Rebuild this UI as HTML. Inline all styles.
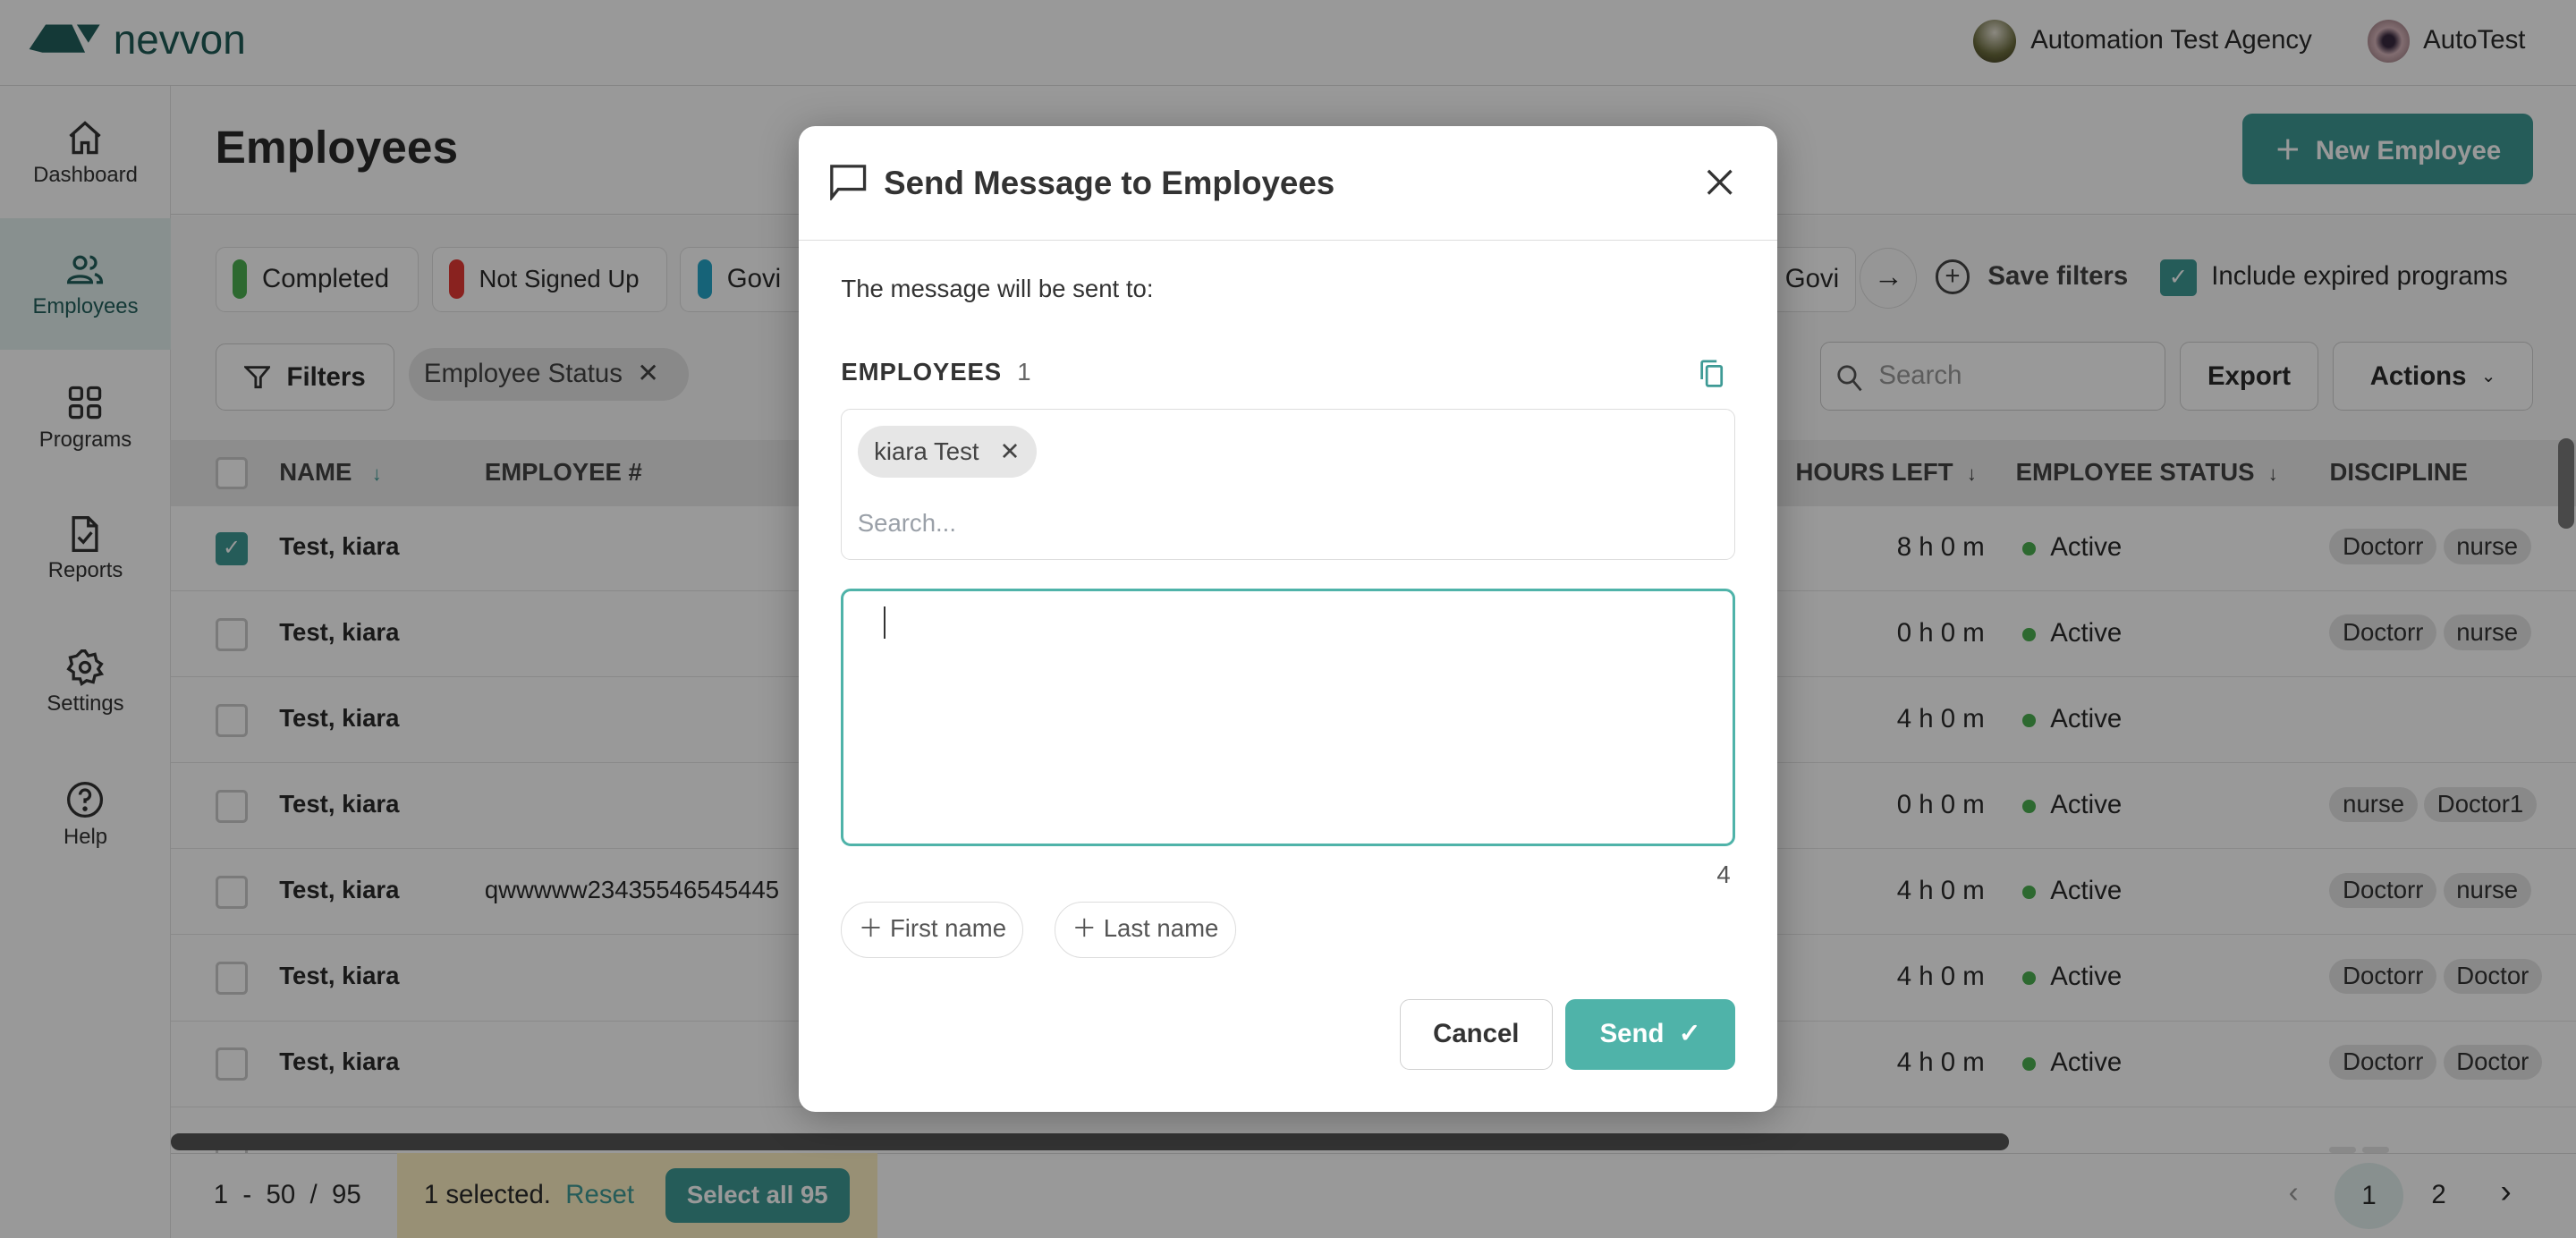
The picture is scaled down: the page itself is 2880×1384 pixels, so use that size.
<!DOCTYPE html>
<html><head><meta charset="utf-8"><style>
*{box-sizing:border-box;margin:0;padding:0}
html,body{width:2880px;height:1384px;overflow:hidden;background:#fff}
#root{width:1568px;height:754px;position:relative;zoom:1.83673;font-family:"Liberation Sans",sans-serif;color:#2b2b2b;font-size:15px;overflow:hidden}
.a{position:absolute}
.t{white-space:nowrap}
.row{position:absolute;left:104px;right:0;height:52px;border-bottom:1px solid #e6e6e6}
.cb{position:absolute;width:20px;height:20px;border:2px solid #ccc;border-radius:3px;background:#fff}
.tag{display:inline-block;background:#e4e4e4;border-radius:11px;padding:2px 8px;font-size:15px;margin-right:4px;color:#333}
.chip{position:absolute;top:150px;height:40px;border:1px solid #e0e0e0;border-radius:6px;background:#fff;display:flex;align-items:center;padding:0 10px;font-size:16px;white-space:nowrap}
.chip i{display:inline-block;width:9px;height:24px;border-radius:5px;margin-right:9px;flex:none}
.btn{position:absolute;border:1px solid #d0d0d0;border-radius:6px;background:#fff;display:flex;align-items:center;justify-content:center;font-weight:bold;font-size:16px}
.nav{position:absolute;left:0;width:104px;text-align:center;font-size:13px;color:#333}
.nav svg{display:block;margin:0 auto 3px}
.pill{position:absolute;top:472px;height:34px;line-height:32px;border:1px solid #ddd;border-radius:17px;padding:0 10px;font-size:15px;color:#555;white-space:nowrap}
#ov{position:absolute;inset:0;background:rgba(0,0,0,0.4)}
</style></head><body><div id="root">
<div class="a" style="left:0;top:0;width:1568px;height:52px;border-bottom:1px solid #ddd;background:#fff"></div>
<svg class="a" style="left:16px;top:12px" width="46" height="22" viewBox="0 0 46 22"><path d="M2 18 L12 3 L28 3 L36 20 L10 20 Z" fill="#22605c"/><path d="M31 3 L45 3 L38 14 Z" fill="#22605c"/></svg>
<div class="a t" style="left:69px;top:9px;font-size:25px;color:#1f5a56">nevvon</div>
<div class="a" style="left:1201px;top:12px;width:26px;height:26px;border-radius:50%;background:radial-gradient(circle at 50% 30%,#e8e4d6,#6a6b3c 60%,#3b3620)"></div>
<div class="a t" style="left:1236px;top:15px;font-size:16px">Automation Test Agency</div>
<div class="a" style="left:1441px;top:12px;width:26px;height:26px;border-radius:50%;background:radial-gradient(circle,#3a2a40 20%,#d8b6bc 45%,#8a6a70)"></div>
<div class="a t" style="left:1475px;top:15px;font-size:16px">AutoTest</div>
<div class="a" style="left:0;top:52px;width:104px;height:702px;border-right:1px solid #e3e3e3;background:#fff"></div>
<div class="a" style="left:0;top:133px;width:104px;height:80px;background:#e3f0ee"></div>
<div class="nav" style="top:72px"><svg width="24" height="24" viewBox="0 0 24 24" fill="none" stroke="#333" stroke-width="1.8"><path d="M3 11 L12 3 L21 11 M5 9 V21 H10 V15 H14 V21 H19 V9"/></svg>Dashboard</div>
<div class="nav" style="top:152px;color:#22605c"><svg width="24" height="24" viewBox="0 0 24 24" fill="none" stroke="#22605c" stroke-width="1.8"><circle cx="9" cy="8" r="3.5"/><path d="M2 20 C2 15 16 15 16 20 Z"/><path d="M15 4.5 A3.5 3.5 0 0 1 15 11.5 M18 15 C21 16 22 18 22 20 H19"/></svg>Employees</div>
<div class="nav" style="top:233px"><svg width="24" height="24" viewBox="0 0 24 24" fill="none" stroke="#333" stroke-width="1.8"><rect x="3" y="3" width="7" height="7" rx="1.5"/><rect x="14" y="3" width="7" height="7" rx="1.5"/><rect x="3" y="14" width="7" height="7" rx="1.5"/><rect x="14" y="14" width="7" height="7" rx="1.5"/></svg>Programs</div>
<div class="nav" style="top:313px"><svg width="24" height="24" viewBox="0 0 24 24" fill="none" stroke="#333" stroke-width="1.8"><path d="M5 2 H14 L19 7 V22 H5 Z M14 2 V7 H19 M8 14 L11 17 L16 11"/></svg>Reports</div>
<div class="nav" style="top:394px"><svg width="24" height="24" viewBox="0 0 24 24" fill="none" stroke="#333" stroke-width="1.8"><circle cx="12" cy="12" r="3"/><path d="M12 2 L14 5 L18 4 L19 8 L22 10 L20 13 L22 16 L18 17 L17 21 L13 20 L10 22 L9 19 L5 19 L5 15 L2 13 L4 10 L3 6 L7 5 L10 2 Z"/></svg>Settings</div>
<div class="nav" style="top:475px"><svg width="24" height="24" viewBox="0 0 24 24" fill="none" stroke="#333" stroke-width="1.8"><circle cx="12" cy="12" r="10"/><path d="M9 9 A3 3 0 1 1 12 12 V14"/><circle cx="12" cy="17.5" r=".6" fill="#333"/></svg>Help</div>
<div class="a t" style="left:131px;top:73px;font-size:28px;font-weight:bold">Employees</div>
<div class="a" style="left:104px;top:130px;width:1464px;border-top:1px solid #ddd"></div>
<div class="a" style="left:1365px;top:69px;width:177px;height:43px;background:#3e9a95;border-radius:6px;color:#fff;font-weight:bold;font-size:16px;display:flex;align-items:center;justify-content:center">＋&nbsp; New Employee</div>
<div class="a" style="left:104px;top:131px;width:1464px;height:137px;background:#fafafa"></div>
<div class="chip" style="left:131px;width:124px"><i style="background:#4caf50"></i>Completed</div>
<div class="chip" style="left:263px;width:143px;font-size:15px"><i style="background:#e53935"></i>Not Signed Up</div>
<div class="chip" style="left:414px;width:80px"><i style="background:#26a6c8"></i>Govi</div>
<div class="chip" style="left:1060px;width:70px;justify-content:flex-end">Govi</div>
<div class="a" style="left:1132px;top:151px;width:35px;height:37px;border:1px solid #ddd;border-radius:50%;text-align:center;line-height:35px;font-size:18px">→</div>
<div class="a t" style="left:1178px;top:158px;font-size:16px;font-weight:bold;color:#444;display:flex;align-items:center"><span style="display:inline-block;width:21px;height:21px;border:2px solid #444;border-radius:50%;text-align:center;line-height:17px;font-weight:normal;margin-right:11px">+</span>Save filters</div>
<div class="a" style="left:1315px;top:158px;width:22px;height:22px;background:#3e9a95;border-radius:3px;color:#fff;text-align:center;line-height:22px;font-size:14px">✓</div>
<div class="a t" style="left:1346px;top:159px;font-size:16px">Include expired programs</div>
<div class="btn" style="left:131px;top:209px;width:109px;height:41px"><svg width="16" height="16" viewBox="0 0 16 16" fill="none" stroke="#333" stroke-width="1.5" style="margin-right:10px"><path d="M1 2 H15 L10 8 V14 H7 V8 Z"/></svg>Filters</div>
<div class="a t" style="left:249px;top:212px;height:32px;width:170px;border-radius:16px;background:#e4e4e4;font-size:16px;line-height:32px;padding:0 9px;color:#444">Employee Status &nbsp;✕</div>
<div class="a" style="left:1108px;top:208px;width:210px;height:42px;border:1px solid #ccc;border-radius:6px;background:#fff;font-size:16px;color:#999;line-height:40px;padding-left:35px">Search<svg class="a" style="left:9px;top:13px" width="16" height="17" viewBox="0 0 16 17" fill="none" stroke="#555" stroke-width="1.5"><circle cx="6.5" cy="6.5" r="5"/><path d="M10 10 L15 16"/></svg></div>
<div class="btn" style="left:1327px;top:208px;width:84px;height:42px">Export</div>
<div class="btn" style="left:1420px;top:208px;width:122px;height:42px">Actions &nbsp;<span style="font-weight:normal;font-size:11px">⌄</span></div>
<div class="a" style="left:104px;top:268px;width:1464px;height:40px;background:#ececec"></div>
<div class="cb" style="left:131px;top:278px"></div>
<div class="a t" style="left:170px;top:279px;font-weight:bold;font-size:15px;color:#444">NAME <span style="color:#3e9a95;font-size:12px;margin-left:8px">↓</span></div>
<div class="a t" style="left:295px;top:279px;font-weight:bold;font-size:15px;color:#444">EMPLOYEE #</div>
<div class="a t" style="left:1093px;top:279px;font-weight:bold;font-size:15px;color:#444">HOURS LEFT &nbsp;<span style="font-size:12px">↓</span></div>
<div class="a t" style="left:1227px;top:279px;font-weight:bold;font-size:15px;color:#444">EMPLOYEE STATUS &nbsp;<span style="font-size:12px">↓</span></div>
<div class="a t" style="left:1418px;top:279px;font-weight:bold;font-size:15px;color:#444">DISCIPLINE</div>
<div class="a" style="left:1557px;top:267px;width:10px;height:55px;border-radius:5px;background:#7a7a7a"></div>
<div id="rows"></div>
<script>
var d=[["8 h 0 m",["Doctorr","nurse"],1,""],["0 h 0 m",["Doctorr","nurse"],0,""],["4 h 0 m",[],0,""],["0 h 0 m",["nurse","Doctor1"],0,""],["4 h 0 m",["Doctorr","nurse"],0,"qwwwww23435546545445"],["4 h 0 m",["Doctorr","Doctor"],0,""],["4 h 0 m",["Doctorr","Doctor"],0,""],["",["",""],0,""]];
var h="";d.forEach(function(r,i){var y=308+i*52.3;
h+='<div class="row" style="top:'+y+'px"></div>';
h+='<div class="cb" style="left:131px;top:'+(y+16)+'px;'+(r[2]?'background:#3e9a95;border-color:#3e9a95;color:#fff;text-align:center;line-height:16px;font-size:13px':'')+'">'+(r[2]?'✓':'')+'</div>';
h+='<div class="a t" style="left:170px;top:'+(y+16)+'px;font-weight:bold">'+(r[0]?'Test, kiara':'')+'</div>';
if(r[3])h+='<div class="a t" style="left:295px;top:'+(y+16)+'px">'+r[3]+'</div>';
if(r[0]){h+='<div class="a t" style="right:360px;top:'+(y+16)+'px;font-size:16px">'+r[0]+'</div>';
h+='<div class="a" style="left:1231px;top:'+(y+22)+'px;width:8px;height:8px;border-radius:50%;background:#4caf50"></div><div class="a t" style="left:1248px;top:'+(y+16)+'px;font-size:16px">Active</div>';}
h+='<div class="a t" style="left:1418px;top:'+(y+14)+'px">'+r[1].map(function(t){return '<span class="tag">'+t+'</span>'}).join('')+'</div>';});
document.getElementById('rows').innerHTML=h;
</script>
<div class="a" style="left:104px;top:690px;width:1119px;height:10px;border-radius:5px;background:#555"></div>
<div class="a" style="left:104px;top:702px;width:1464px;height:52px;background:#fff;border-top:1px solid #ddd"></div>
<div class="a t" style="left:130px;top:718px;font-size:16px">1 &nbsp;- &nbsp;50 &nbsp;/ &nbsp;95</div>
<div class="a" style="left:242px;top:702px;width:292px;height:52px;background:#fdf0c4"></div>
<div class="a t" style="left:258px;top:718px;font-size:16px">1 selected. &nbsp;<span style="color:#3e9a95">Reset</span></div>
<div class="a" style="left:405px;top:711px;width:112px;height:33px;background:#3e9a95;border-radius:6px;color:#fff;font-weight:bold;font-size:15px;text-align:center;line-height:33px">Select all 95</div>
<div class="a t" style="left:1393px;top:716px;font-size:18px;color:#999">‹</div>
<div class="a" style="left:1421px;top:708px;width:42px;height:40px;border-radius:50%;background:#e3f0ee;text-align:center;line-height:40px;font-size:16px">1</div>
<div class="a t" style="left:1480px;top:718px;font-size:16px">2</div>
<div class="a t" style="left:1522px;top:714px;font-size:20px">›</div>
<div id="ov"></div>
<div class="a" style="left:486px;top:77px;width:596px;height:600px;background:#fff;border-radius:10px;box-shadow:0 4px 24px rgba(0,0,0,.3)">
<svg class="a" style="left:19px;top:23px" width="23" height="22" viewBox="0 0 23 22" fill="none" stroke="#333" stroke-width="1.8"><path d="M1 1 H21 V15 H5 L1 20 Z"/></svg>
<div class="a t" style="left:52px;top:23px;font-size:20px;font-weight:bold;color:#333">Send Message to Employees</div>
<svg class="a" style="left:553px;top:26px" width="16" height="16" viewBox="0 0 16 16" stroke="#333" stroke-width="1.8"><path d="M1 1 L15 15 M15 1 L1 15"/></svg>
<div class="a" style="left:0;top:69px;width:596px;border-top:1px solid #ddd"></div>
<div class="a t" style="left:26px;top:90px;font-size:15px;color:#333">The message will be sent to:</div>
<div class="a t" style="left:26px;top:141px;font-size:15px;font-weight:bold;color:#333;letter-spacing:.5px">EMPLOYEES <span style="font-weight:normal;color:#666">&nbsp;1</span></div>
<svg class="a" style="left:548px;top:142px" width="16" height="17" viewBox="0 0 16 17" fill="none" stroke="#3e9a95" stroke-width="1.5"><rect x="5" y="4" width="9" height="12" rx="1"/><path d="M2 12 V2 A1 1 0 0 1 3 1 H11"/></svg>
<div class="a" style="left:26px;top:172px;width:544px;height:92px;border:1px solid #ddd;border-radius:6px"></div>
<div class="a t" style="left:36px;top:182px;height:32px;border-radius:16px;background:#e6e6e6;padding:0 10px;line-height:32px;font-size:15px;color:#444">kiara Test &nbsp;&nbsp;✕</div>
<div class="a t" style="left:36px;top:233px;font-size:15px;color:#9aa0a8">Search...</div>
<div class="a" style="left:26px;top:281px;width:544px;height:157px;border:2px solid #4fb3a9;border-radius:6px"></div>
<div class="a" style="left:52px;top:292px;width:1px;height:20px;background:#333"></div>
<div class="a t" style="left:559px;top:447px;font-size:15px;color:#555">4</div>
<div class="pill" style="left:26px">＋ First name</div>
<div class="pill" style="left:156px">＋ Last name</div>
<div class="btn" style="left:366px;top:531px;width:93px;height:43px;color:#333">Cancel</div>
<div class="a" style="left:467px;top:531px;width:103px;height:43px;border-radius:6px;background:#4fb3a9;color:#fff;font-weight:bold;font-size:16px;text-align:center;line-height:43px">Send &nbsp;✓</div>
</div>
</div></body></html>
